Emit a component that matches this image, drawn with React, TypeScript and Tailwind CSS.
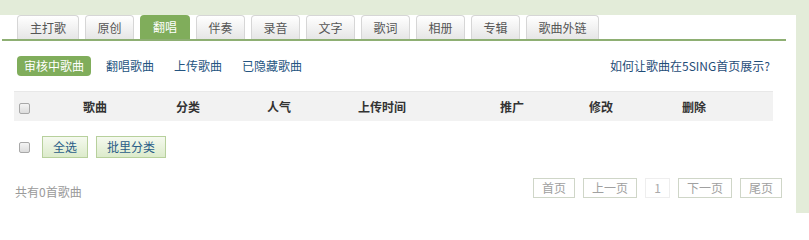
import React from "react";

const tabs = [
  { label: "主打歌", w: "w-[62px]" },
  { label: "原创", w: "w-[49px]" },
  { label: "翻唱", w: "w-[50px]", active: true },
  { label: "伴奏", w: "w-[49px]" },
  { label: "录音", w: "w-[49px]" },
  { label: "文字", w: "w-[49px]" },
  { label: "歌词", w: "w-[49px]" },
  { label: "相册", w: "w-[49px]" },
  { label: "专辑", w: "w-[49px]" },
  { label: "歌曲外链", w: "w-[73px]" },
];

const columns = [
  { label: "歌曲", w: "w-[93px]" },
  { label: "分类", w: "w-[91px]" },
  { label: "人气", w: "w-[91px]" },
  { label: "上传时间", w: "w-[142px]" },
  { label: "推广", w: "w-[89px]" },
  { label: "修改", w: "w-[93px]" },
  { label: "删除", w: "w-[60px]" },
];

const pages = [
  { label: "首页", w: "w-[42px]" },
  { label: "上一页", w: "w-[54px]" },
  { label: "1", w: "w-[25px]", current: true },
  { label: "下一页", w: "w-[54px]" },
  { label: "尾页", w: "w-[42px]" },
];

// small grey square, like the old ie checkbox
const Box = () => (
  <span className="block w-[11px] h-[11px] rounded-[2px] border border-[#a8a8a8] bg-gradient-to-b from-[#f4f4f4] to-[#dcdcdc]" />
);

export default function App() {
  return (
    <div
      className="w-[809px] h-[213px] overflow-hidden bg-[#e3ecd9] pt-[5px] pr-[13px] text-[12px] leading-none"
      style={{ fontFamily: '"Noto Sans CJK SC", "Liberation Sans", sans-serif' }}
    >
      <div className="h-full bg-white">
        {/* tabs */}
        <div className="ml-[2px] w-[784px] mt-[10px] pl-[15px] flex gap-[6px] border-b-2 border-[#8eaf73]">
          {tabs.map((t) =>
            t.active ? (
              <div
                key={t.label}
                className={`${t.w} h-[24px] rounded-t-[4px] bg-[#80ad5b] text-white flex items-center justify-center`}
              >
                {t.label}
              </div>
            ) : (
              <div
                key={t.label}
                className={`${t.w} h-[24px] rounded-t-[4px] border border-b-0 border-[#d6d6d6] bg-gradient-to-b from-white to-[#e6e6e6] text-[#555] flex items-center justify-center`}
              >
                {t.label}
              </div>
            )
          )}
        </div>

        {/* sub nav */}
        <div className="mt-[15px] ml-[17px] mr-[26px] h-[20px] flex items-center text-[#255581]">
          <span className="h-[20px] px-[7px] rounded-[4px] bg-[#80ad5b] text-white flex items-center">
            审核中歌曲
          </span>
          <span className="ml-[15px]">翻唱歌曲</span>
          <span className="ml-[20px]">上传歌曲</span>
          <span className="ml-[20px]">已隐藏歌曲</span>
          <span className="ml-auto text-[#1f4d78]">如何让歌曲在5SING首页展示?</span>
        </div>

        {/* table head */}
        <div className="mt-[15px] ml-[14px] w-[759px] h-[30px] bg-[#f2f2f2] border-t border-[#e8e8e8] flex items-center font-bold text-[#333]">
          <div className="w-[69px] pl-[5px] pt-[3px]">
            <Box />
          </div>
          {columns.map((c) => (
            <div key={c.label} className={c.w}>
              {c.label}
            </div>
          ))}
        </div>

        {/* batch actions */}
        <div className="mt-[15px] ml-[19px] h-[22px] flex items-center">
          <Box />
          <button className="ml-[12px] w-[46px] h-[22px] border border-[#b7d09c] bg-gradient-to-b from-[#f5f9ef] to-[#dcebcb] text-[#2a5d87]">
            全选
          </button>
          <button className="ml-[8px] w-[70px] h-[22px] border border-[#b7d09c] bg-gradient-to-b from-[#f5f9ef] to-[#dcebcb] text-[#2a5d87]">
            批里分类
          </button>
        </div>

        {/* footer */}
        <div className="mt-[20px] ml-[15px] mr-[14px] h-[20px] flex items-center">
          <span className="text-[#9a9a9a] mt-[8px]">共有0首歌曲</span>
          <div className="ml-auto flex gap-[8px]">
            {pages.map((p) => (
              <span
                key={p.label}
                className={`${p.w} h-[20px] flex items-center justify-center border ${
                  p.current ? "border-[#eeeeee] text-[#aaa]" : "border-[#cfd6c8] text-[#a0a0a0]"
                }`}
              >
                {p.label}
              </span>
            ))}
          </div>
        </div>
      </div>
    </div>
  );
}
